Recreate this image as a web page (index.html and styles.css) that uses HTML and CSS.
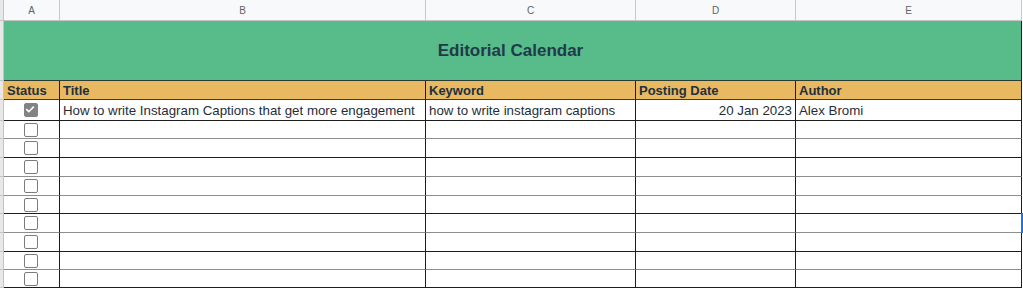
FILE: index.html
```html
<!DOCTYPE html>
<html>
<head>
<meta charset="utf-8">
<link rel="stylesheet" href="styles.css">
</head>
<body>
<div class="sheet">
  <div class="row colhead">
    <div class="strip"></div>
    <div class="ch">A</div>
    <div class="ch">B</div>
    <div class="ch">C</div>
    <div class="ch">D</div>
    <div class="ch">E</div>
  </div>
  <div class="row">
    <div class="strip"></div>
    <div class="title">Editorial Calendar</div>
  </div>
  <div class="row hdr">
    <div class="strip"></div>
    <div class="c h">Status</div>
    <div class="c h">Title</div>
    <div class="c h">Keyword</div>
    <div class="c h">Posting Date</div>
    <div class="c h">Author</div>
  </div>
  <div class="row dk">
    <div class="strip"></div>
    <div class="c cb"><span class="box on"><svg viewBox="0 0 14 14" width="14" height="14"><path d="M3.2 7.2 L5.8 9.7 L10.8 4.6" fill="none" stroke="#fff" stroke-width="1.6"/></svg></span></div>
    <div class="c">How to write Instagram Captions that get more engagement</div>
    <div class="c">how to write instagram captions</div>
    <div class="c r">20 Jan 2023</div>
    <div class="c">Alex Bromi</div>
  </div>
  <div class="row lt">
    <div class="strip"></div>
    <div class="c cb"><span class="box"></span></div>
    <div class="c"></div><div class="c"></div><div class="c"></div><div class="c"></div>
  </div>
  <div class="row dk">
    <div class="strip"></div>
    <div class="c cb"><span class="box"></span></div>
    <div class="c"></div><div class="c"></div><div class="c"></div><div class="c"></div>
  </div>
  <div class="row lt">
    <div class="strip"></div>
    <div class="c cb"><span class="box"></span></div>
    <div class="c"></div><div class="c"></div><div class="c"></div><div class="c"></div>
  </div>
  <div class="row lt">
    <div class="strip"></div>
    <div class="c cb"><span class="box"></span></div>
    <div class="c"></div><div class="c"></div><div class="c"></div><div class="c"></div>
  </div>
  <div class="row dk">
    <div class="strip"></div>
    <div class="c cb"><span class="box"></span></div>
    <div class="c"></div><div class="c"></div><div class="c"></div><div class="c"></div>
  </div>
  <div class="row lt">
    <div class="strip"></div>
    <div class="c cb"><span class="box"></span></div>
    <div class="c"></div><div class="c"></div><div class="c"></div><div class="c"></div>
  </div>
  <div class="row dk">
    <div class="strip"></div>
    <div class="c cb"><span class="box"></span></div>
    <div class="c"></div><div class="c"></div><div class="c"></div><div class="c"></div>
  </div>
  <div class="row lt">
    <div class="strip"></div>
    <div class="c cb"><span class="box"></span></div>
    <div class="c"></div><div class="c"></div><div class="c"></div><div class="c"></div>
  </div>
  <div class="row dk">
    <div class="strip"></div>
    <div class="c cb"><span class="box"></span></div>
    <div class="c"></div><div class="c"></div><div class="c"></div><div class="c"></div>
  </div>
  <div class="sel"></div>
</div>
</body>
</html>
```
FILE: styles.css
```css
html, body {
  margin: 0;
  padding: 0;
  background: #ffffff;
}
body {
  font-family: "Liberation Sans", Arial, sans-serif;
  width: 1023px;
  height: 288px;
  overflow: hidden;
}
.sheet {
  position: relative;
  display: grid;
  grid-template-columns: 4px 56px 366px 210px 160px 226px;
  grid-template-rows: 21px 60px 19px 21px 18px 19px 19px 19px 18px 19px 19px 18px 18px;
}
.row {
  display: contents;
}
.strip {
  background: #e8e8e8;
  border-right: 1px solid #c4c4c4;
  border-bottom: 1px solid #c4c4c4;
  box-sizing: border-box;
}
.ch {
  box-sizing: border-box;
  background: #f8f9fa;
  border-right: 1px solid #c8c8c8;
  border-bottom: 1px solid #c4c4c4;
  color: #606367;
  font-size: 10px;
  display: flex;
  align-items: center;
  justify-content: center;
}
.title {
  grid-column: 2 / span 5;
  box-sizing: border-box;
  background: #57bb8a;
  border-bottom: 1px solid #2b3a35;
  border-right: 1px solid #1d1d1d;
  color: #1f3a48;
  font-weight: bold;
  font-size: 17px;
  display: flex;
  align-items: center;
  justify-content: center;
  padding-right: 4px;
  padding-top: 1px;
}
.c {
  box-sizing: border-box;
  border-right: 1px solid #1d1d1d;
  border-bottom: 1px solid #1d1d1d;
  font-size: 13.3px;
  color: #1f2d3a;
  padding: 0 3px;
  display: flex;
  align-items: center;
  white-space: nowrap;
  overflow: hidden;
}
.hdr .c {
  background: #e8b961;
  font-weight: bold;
  font-size: 13px;
  color: #20303e;
  border-bottom-color: #3a3a3a;
}
.lt .c {
  border-bottom-color: #8e8e8e;
}
.r {
  justify-content: flex-end;
}
.cb {
  justify-content: center;
  padding: 0;
}
.box {
  width: 14px;
  height: 14px;
  box-sizing: border-box;
  border: 1.6px solid #7c7c7c;
  border-radius: 2px;
  display: block;
  margin-left: -1px;
}
.box.on {
  background: #838383;
  border-color: #838383;
  position: relative;
}
.box.on svg {
  position: absolute;
  left: -1.6px;
  top: -1.6px;
}
.sel {
  position: absolute;
  left: 1021px;
  top: 213px;
  width: 2px;
  height: 20px;
  background: #1a73e8;
}
```
